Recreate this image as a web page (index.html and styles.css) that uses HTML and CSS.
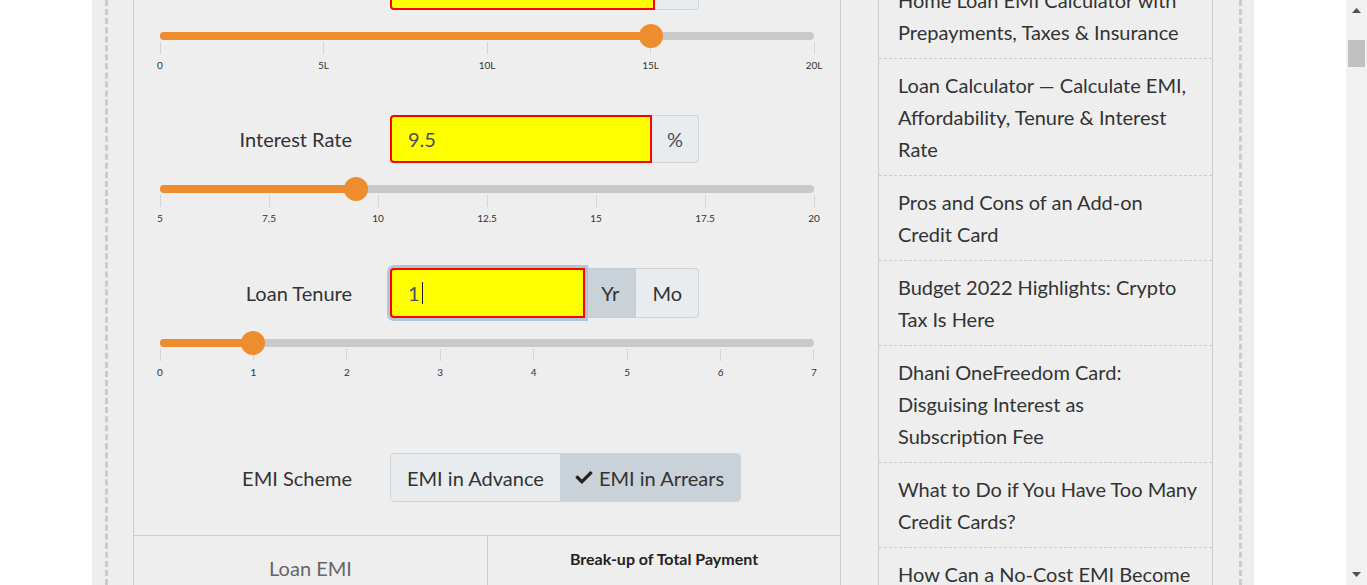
FILE: index.html
```html
<!DOCTYPE html>
<html lang="en">
<head>
<meta charset="utf-8">
<title>EMI Calculator</title>
<link rel="stylesheet" href="styles.css">
</head>
<body>
<div class="screen">
  <div class="viewport">
    <div class="page">
      <div class="frame">
        <section class="calc">
          <div class="field">
            <div class="field-row">
              <div class="field-label"></div>
              <div class="group">
                <div class="input"></div>
                <div class="addon rupee"></div>
              </div>
            </div>
            <div class="slider">
              <div class="track"><div class="fill" style="width:75%"></div><span class="thumb" style="left:75%"></span></div>
              <div class="ticks">
                <div class="tick"><i></i><span>0</span></div>
                <div class="tick"><i></i><span>5L</span></div>
                <div class="tick"><i></i><span>10L</span></div>
                <div class="tick"><i></i><span>15L</span></div>
                <div class="tick"><i></i><span>20L</span></div>
              </div>
            </div>
          </div>

          <div class="field">
            <div class="field-row">
              <div class="field-label">Interest Rate</div>
              <div class="group">
                <div class="input">9.5</div>
                <div class="addon">%</div>
              </div>
            </div>
            <div class="slider">
              <div class="track"><div class="fill" style="width:30%"></div><span class="thumb" style="left:30%"></span></div>
              <div class="ticks">
                <div class="tick"><i></i><span>5</span></div>
                <div class="tick"><i></i><span>7.5</span></div>
                <div class="tick"><i></i><span>10</span></div>
                <div class="tick"><i></i><span>12.5</span></div>
                <div class="tick"><i></i><span>15</span></div>
                <div class="tick"><i></i><span>17.5</span></div>
                <div class="tick"><i></i><span>20</span></div>
              </div>
            </div>
          </div>

          <div class="field tenure">
            <div class="field-row">
              <div class="field-label">Loan Tenure</div>
              <div class="group">
                <div class="input focused">1<span class="caret"></span></div>
                <div class="addon btn active">Yr</div>
                <div class="addon btn">Mo</div>
              </div>
            </div>
            <div class="slider">
              <div class="track"><div class="fill" style="width:14.2857%"></div><span class="thumb" style="left:14.2857%"></span></div>
              <div class="ticks">
                <div class="tick"><i></i><span>0</span></div>
                <div class="tick"><i></i><span>1</span></div>
                <div class="tick"><i></i><span>2</span></div>
                <div class="tick"><i></i><span>3</span></div>
                <div class="tick"><i></i><span>4</span></div>
                <div class="tick"><i></i><span>5</span></div>
                <div class="tick"><i></i><span>6</span></div>
                <div class="tick"><i></i><span>7</span></div>
              </div>
            </div>
          </div>

          <div class="scheme">
            <div class="field-row">
              <div class="field-label">EMI Scheme</div>
              <div class="toggle">
                <div class="opt">EMI in Advance</div>
                <div class="opt active"><svg class="check" viewBox="0 0 512 512" aria-hidden="true"><path d="M173.9 439.4l-166.4-166.4c-10-10-10-26.2 0-36.2l36.2-36.2c10-10 26.2-10 36.2 0L192 312.7 432.1 72.6c10-10 26.2-10 36.2 0l36.2 36.2c10 10 10 26.2 0 36.2l-294.4 294.4c-10 10-26.2 10-36.2 0z"/></svg>EMI in Arrears</div>
              </div>
            </div>
          </div>

          <div class="summary">
            <div class="cell emi">Loan EMI</div>
            <div class="cell breakup">Break-up of Total Payment</div>
          </div>
        </section>

        <aside class="sidebar">
          <ul class="posts">
            <li>Home Loan EMI Calculator with<br>Prepayments, Taxes &amp; Insurance</li>
            <li>Loan Calculator — Calculate EMI,<br>Affordability, Tenure &amp; Interest<br>Rate</li>
            <li>Pros and Cons of an Add-on<br>Credit Card</li>
            <li>Budget 2022 Highlights: Crypto<br>Tax Is Here</li>
            <li>Dhani OneFreedom Card:<br>Disguising Interest as<br>Subscription Fee</li>
            <li>What to Do if You Have Too Many<br>Credit Cards?</li>
            <li>How Can a No-Cost EMI Become<br>Costly?</li>
          </ul>
        </aside>
      </div>
    </div>
  </div>
  <div class="scrollbar">
    <div class="sb-btn"><svg width="9" height="5" viewBox="0 0 9 5"><polygon points="0,5 4.5,0 9,5" fill="#505050"/></svg></div>
    <div class="sb-thumb"></div>
    <div class="sb-space"></div>
    <div class="sb-btn"><svg width="9" height="5" viewBox="0 0 9 5"><polygon points="0,0 9,0 4.5,5" fill="#505050"/></svg></div>
  </div>
</div>
</body>
</html>
```

FILE: styles.css
```css
* { box-sizing: border-box; }

html, body {
  margin: 0;
  height: 100%;
  overflow: hidden;
}

body {
  font-family: Lato, "Open Sans", "Liberation Sans", sans-serif;
  background: #fff;
  color: #333;
}

.screen {
  display: flex;
  height: 585px;
}

.viewport {
  flex: 1;
  overflow: hidden;
}

.page {
  margin-left: 92px;
  width: 1162px;
  height: 100%;
  background: #eee;
  padding: 0 12px 0 13px;
}

.frame {
  height: 100%;
  border-left: 3px dashed #ccc;
  border-right: 3px dashed #ccc;
  padding: 0 26px 0 25px;
  display: flex;
  align-items: flex-start;
  gap: 37px;
}

/* calculator */
.calc {
  width: 708px;
  flex: none;
  border: 1px solid #ccc;
  border-top: 0;
  margin-top: -38px;
}

.field {
  padding: 0 25px;
  margin-bottom: 44px;
}

.field-row {
  display: grid;
  grid-template-columns: 193px auto;
  column-gap: 38px;
  align-items: center;
  justify-content: start;
}

.field-label {
  text-align: right;
  font-size: 20px;
  color: #333;
}

.group {
  display: flex;
  width: 309px;
  height: 48px;
}

.tenure .group {
  height: 50px;
}

.input {
  position: relative;
  z-index: 1;
  flex: 1;
  display: flex;
  align-items: center;
  padding-left: 16px;
  border: 2px solid #f00;
  border-radius: 4px 0 0 4px;
  background: #ff0;
  font-size: 20px;
  color: #4b4f55;
}

.input.focused {
  box-shadow: 0 0 0 3px #aec7d7;
}

.caret {
  display: inline-block;
  width: 1px;
  height: 22px;
  margin-left: 2px;
  background: #222;
}

.addon {
  display: flex;
  align-items: center;
  padding: 0 15px;
  border: 1px solid #ced4da;
  border-left: 0;
  background: #e9ecef;
  font-size: 20px;
  color: #4b4f55;
}

.addon.rupee {
  width: 44px;
  margin-top: -1px;
}

.addon:last-child {
  border-radius: 0 4px 4px 0;
}

.addon.btn {
  color: #333;
  padding: 0 16px;
}

.addon.btn.active {
  background: #c9d1d9;
  border-color: #c4ccd4;
}

/* sliders */
.slider {
  margin-top: 22px;
}

.tenure .slider {
  margin-top: 21px;
}

.track {
  position: relative;
  height: 8px;
  margin: 0 1px;
  border-radius: 4px;
  background: #c9c9c9;
}

.fill {
  height: 100%;
  border-radius: 4px 0 0 4px;
  background: #ee8d2e;
}

.thumb {
  position: absolute;
  top: -8px;
  width: 24px;
  height: 24px;
  margin-left: -12px;
  border-radius: 50%;
  background: #ee8d2e;
}

.ticks {
  display: flex;
  justify-content: space-between;
  margin: 2px 1px 0;
}

.tick {
  width: 0;
  display: flex;
  flex-direction: column;
  align-items: center;
}

.tick i {
  display: block;
  width: 1px;
  height: 12px;
  background: #d2d6da;
}

.tick span {
  margin-top: 5px;
  font-size: 10px;
  line-height: 12px;
  color: #333;
  white-space: nowrap;
}

/* scheme */
.scheme {
  padding: 31px 25px 33px;
}

.toggle {
  display: flex;
  height: 49px;
  border: 1px solid #ced4da;
  border-radius: 4px;
  overflow: hidden;
}

.opt {
  display: flex;
  align-items: center;
  padding: 0 16px;
  background: #e9ecef;
  font-size: 20px;
  color: #333;
  white-space: nowrap;
}

.opt.active {
  background: #c9d1d9;
  padding: 0 16px 0 14px;
}

.check {
  width: 20px;
  height: 17px;
  margin-right: 5px;
  fill: #222;
}

/* summary */
.summary {
  display: grid;
  grid-template-columns: 354px 1fr;
  border-top: 1px solid #ccc;
  height: 120px;
}

.cell {
  text-align: center;
}

.cell.emi {
  border-right: 1px solid #ccc;
  padding-top: 20px;
  font-size: 20px;
  line-height: 24px;
  color: #666;
}

.cell.breakup {
  padding-top: 13px;
  font-size: 16px;
  line-height: 20px;
  font-weight: 700;
  color: #222;
}

/* sidebar */
.sidebar {
  width: 335px;
  flex: none;
  margin-top: -26px;
  border-left: 1px solid #ccc;
  border-right: 1px solid #ccc;
}

.posts {
  list-style: none;
  margin: 0;
  padding: 0;
}

.posts li {
  padding: 10px 19px;
  font-size: 20px;
  line-height: 32px;
  color: #333;
  border-bottom: 1px dashed #ccc;
  white-space: nowrap;
}

/* scrollbar */
.scrollbar {
  width: 21px;
  flex: none;
  display: flex;
  flex-direction: column;
  align-items: center;
  background: #f1f1f1;
}

.sb-btn {
  height: 21px;
  width: 100%;
  display: flex;
  align-items: center;
  justify-content: center;
}

.sb-thumb {
  margin-top: 19px;
  width: 17px;
  height: 27px;
  background: #c1c1c1;
}

.sb-space {
  flex: 1;
}
```
